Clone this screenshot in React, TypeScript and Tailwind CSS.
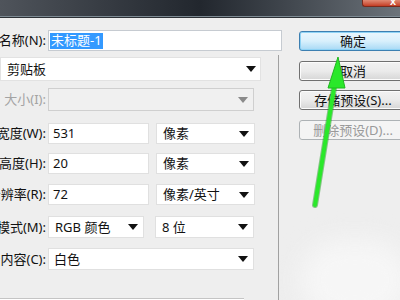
import React from "react";

const FONT = { fontFamily: '"Noto Sans", "Noto Sans CJK SC", sans-serif' };

function Arrow({ grey }: { grey?: boolean }) {
  return (
    <svg width="10" height="6" viewBox="0 0 10 6" className="shrink-0">
      <polygon points="0,0 10,0 5,6" fill={grey ? "#8a8a8a" : "#111"} />
    </svg>
  );
}

function Label({ text, disabled }: { text: string; disabled?: boolean }) {
  return (
    <div className="w-[46px] shrink-0 flex justify-end overflow-hidden">
      <span
        className={`whitespace-nowrap text-[13px] leading-none ${disabled ? "text-[#a3a3a3]" : "text-[#111]"}`}
      >
        {text}
      </span>
    </div>
  );
}

function Btn({ text, primary, disabled }: { text: string; primary?: boolean; disabled?: boolean }) {
  const base =
    "w-[112px] h-[20px] rounded-[3px] border flex items-center justify-center text-[13px] leading-none shrink-0";
  if (primary)
    return (
      <div
        className={`${base} border-[#3c7fb1] bg-gradient-to-b from-[#eaf6fd] via-[#d9f0fc] to-[#a7d9f5] text-[#111] shadow-[inset_0_0_0_1px_#8fd3f5]`}
      >
        <span className="-ml-[4px]">{text}</span>
      </div>
    );
  if (disabled)
    return (
      <div className={`${base} border-[#adb2b5] bg-[#f4f4f4] text-[#9a9a9a]`}>
        <span className="-ml-[4px]">{text}</span>
      </div>
    );
  return (
    <div
      className={`${base} border-[#707070] bg-gradient-to-b from-[#f2f2f2] via-[#ebebeb] to-[#d6d6d6] text-[#111] shadow-[inset_0_0_0_1px_#fcfcfc]`}
    >
      <span className="-ml-[4px]">{text}</span>
    </div>
  );
}

export default function App() {
  return (
    <div className="relative w-[400px] h-[300px] overflow-hidden bg-[#eeeeee]" style={FONT}>
      {/* title bar */}
      <div className="h-[16px] bg-gradient-to-r from-[#4f545b] via-[#22272e] to-[#6c737a] flex justify-end">
        <div className="w-[38px] h-[7px] rounded-bl-[3px] bg-gradient-to-b from-[#e08a74] to-[#c33b22] border border-[#7a2a1c] border-t-0 border-r-0 flex justify-end pr-[4px] items-end">
          <span className="text-white text-[9px] leading-none font-bold">X</span>
        </div>
      </div>
      <div className="h-[1px] bg-[#7d8a93]" />
      <div className="h-[1px] bg-[#2d3136]" />

      <div className="flex">
        {/* left */}
        <div className="w-[282px] shrink-0 flex flex-col">
          {/* name */}
          <div className="mt-[12px] flex items-center gap-[2px] h-[21px]">
            <Label text="名称(N):" />
            <div className="w-[234px] h-[21px] bg-white border border-[#c6cbd1] flex items-center pl-[1px]">
              <span className="bg-[#3399ff] text-white text-[13px] leading-none px-[1px] py-[2px] h-[16px] flex items-center">
                未标题-1
              </span>
            </div>
          </div>
          <div className="mt-[4px] w-[279px] border-r border-[#a0a0a0] flex flex-col h-[300px]">
            {/* preset */}
            <div className="mt-[2px] w-[261px] h-[24px] bg-white border border-[#e2e2e2] flex items-center justify-between pl-[6px] pr-[4px]">
              <span className="text-[13px] leading-none text-[#111]">剪贴板</span>
              <Arrow />
            </div>
            {/* size */}
            <div className="mt-[7px] flex items-center gap-[2px] h-[23px]">
              <Label text="大小(I):" disabled />
              <div className="w-[206px] h-[23px] bg-[#f0f0f0] border border-[#cfcfcf] flex items-center justify-end pr-[5px]">
                <Arrow grey />
              </div>
            </div>
            {/* width */}
            <div className="mt-[12px] flex items-center gap-[2px] h-[21px]">
              <Label text="宽度(W):" />
              <div className="w-[101px] h-[21px] bg-white border border-[#e0e0e0] flex items-center pl-[4px]">
                <span className="text-[13px] leading-none text-[#111]">531</span>
              </div>
              <div className="ml-[5px] w-[99px] h-[21px] bg-white border border-[#e0e0e0] flex items-center justify-between pl-[6px] pr-[5px]">
                <span className="text-[13px] leading-none text-[#111]">像素</span>
                <Arrow />
              </div>
            </div>
            {/* height */}
            <div className="mt-[9px] flex items-center gap-[2px] h-[21px]">
              <Label text="高度(H):" />
              <div className="w-[101px] h-[21px] bg-white border border-[#e0e0e0] flex items-center pl-[4px]">
                <span className="text-[13px] leading-none text-[#111]">20</span>
              </div>
              <div className="ml-[5px] w-[99px] h-[21px] bg-white border border-[#e0e0e0] flex items-center justify-between pl-[6px] pr-[5px]">
                <span className="text-[13px] leading-none text-[#111]">像素</span>
                <Arrow />
              </div>
            </div>
            {/* resolution */}
            <div className="mt-[10px] flex items-center gap-[2px] h-[21px]">
              <Label text="分辨率(R):" />
              <div className="w-[101px] h-[21px] bg-white border border-[#e0e0e0] flex items-center pl-[4px]">
                <span className="text-[13px] leading-none text-[#111]">72</span>
              </div>
              <div className="ml-[5px] w-[99px] h-[21px] bg-white border border-[#e0e0e0] flex items-center justify-between pl-[6px] pr-[5px]">
                <span className="text-[13px] leading-none text-[#111]">像素/英寸</span>
                <Arrow />
              </div>
            </div>
            {/* mode */}
            <div className="mt-[11px] flex items-center gap-[2px] h-[22px]">
              <Label text="颜色模式(M):" />
              <div className="w-[96px] h-[22px] bg-white border border-[#e0e0e0] flex items-center justify-between pl-[6px] pr-[5px]">
                <span className="text-[13px] leading-none text-[#111]">RGB 颜色</span>
                <Arrow />
              </div>
              <div className="ml-[9px] w-[99px] h-[22px] bg-white border border-[#e0e0e0] flex items-center justify-between pl-[6px] pr-[5px]">
                <span className="text-[13px] leading-none text-[#111]">8 位</span>
                <Arrow />
              </div>
            </div>
            {/* background */}
            <div className="mt-[10px] flex items-center gap-[2px] h-[22px]">
              <Label text="背景内容(C):" />
              <div className="w-[206px] h-[22px] bg-white border border-[#e0e0e0] flex items-center justify-between pl-[5px] pr-[5px]">
                <span className="text-[13px] leading-none text-[#111]">白色</span>
                <Arrow />
              </div>
            </div>
            <div className="mt-[28px] w-[244px] h-[1px] bg-[#c4c4c4]" />
            <div className="w-[244px] h-[1px] bg-white" />
          </div>
        </div>

        {/* right buttons */}
        <div className="pl-[17px] pt-[13px] flex flex-col">
          <Btn text="确定" primary />
          <div className="mt-[10px]">
            <Btn text="取消" />
          </div>
          <div className="mt-[9px]">
            <Btn text="存储预设(S)..." />
          </div>
          <div className="mt-[10px]">
            <Btn text="删除预设(D)..." disabled />
          </div>
        </div>
      </div>

      {/* soft light blur bottom right */}
      <div className="absolute left-[300px] top-[240px] w-[110px] h-[80px] rounded-full bg-[#f6f6f6] blur-[12px] pointer-events-none" />

      {/* green arrow annotation */}
      <svg className="absolute left-0 top-0 pointer-events-none" width="400" height="300" viewBox="0 0 400 300">
        <line x1="315" y1="205" x2="335" y2="82" stroke="#1f9a1f" strokeWidth="6" strokeLinecap="round" opacity="0.5" />
        <line x1="315" y1="205" x2="335" y2="82" stroke="#2ae82a" strokeWidth="4" strokeLinecap="round" />
        <polygon points="338,57 328,88 345,88" fill="#2ae82a" stroke="#1fb81f" strokeWidth="1" strokeLinejoin="round" />
      </svg>
    </div>
  );
}
